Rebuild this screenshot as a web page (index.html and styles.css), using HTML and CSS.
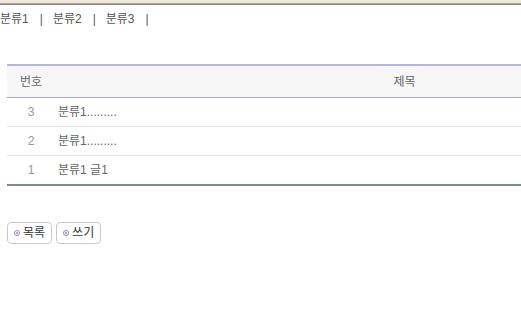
FILE: index.html
```html
<!DOCTYPE html>
<html lang="ko">
<head>
<meta charset="utf-8">
<title>게시판</title>
<link rel="stylesheet" href="styles.css">
</head>
<body>
<div class="page">
  <div class="topbar"></div>
  <div class="nav"><a class="nav-link">분류1</a><span class="sep">|</span><a class="nav-link">분류2</a><span class="sep">|</span><a class="nav-link">분류3</a><span class="sep">|</span></div>
  <table class="board">
    <thead>
      <tr>
        <th class="col-num">번호</th>
        <th class="col-title">제목</th>
      </tr>
    </thead>
    <tbody>
      <tr><td class="num">3</td><td class="title">분류1.........</td></tr>
      <tr><td class="num">2</td><td class="title">분류1.........</td></tr>
      <tr class="last"><td class="num">1</td><td class="title">분류1 글1</td></tr>
    </tbody>
  </table>
  <div class="buttons">
    <span class="btn"><span class="bullet"></span>목록</span>
    <span class="btn"><span class="bullet"></span>쓰기</span>
  </div>
</div>
</body>
</html>
```
FILE: styles.css
```css
html, body {
  margin: 0;
  padding: 0;
  background: #fff;
  overflow: hidden;
}
.page {
  width: 521px;
  height: 314px;
  overflow: hidden;
  font-family: "Liberation Sans", "Noto Sans CJK KR", sans-serif;
  font-size: 12px;
  color: #666;
}
.topbar {
  height: 3px;
  background: #ece9d8;
  border-bottom: 1px solid #aca899;
  box-shadow: 0 1px 0 #8a887e;
}
.nav {
  padding-top: 7px;
  height: 16px;
  line-height: 16px;
  color: #555;
  white-space: nowrap;
}
.nav-link {
  color: #555;
}
.sep {
  margin: 0 10px 0 11px;
  color: #555;
}
.board {
  margin-top: 37px;
  margin-left: 7px;
  width: 747px;
  border-collapse: collapse;
  border-top: 2px solid #b5b5ee;
  border-bottom: 2px solid #7d8996;
  table-layout: fixed;
}
.board th {
  height: 31px;
  padding: 0;
  background: #f7f7f7;
  border-bottom: 1px solid #a8a8c8;
  font-weight: normal;
  color: #666;
  line-height: 14px;
}
.col-num {
  width: 48px;
  text-align: center;
}
.col-title {
  text-align: center;
}
.board td {
  height: 28px;
  padding: 0;
  border-bottom: 1px solid #e3e3e3;
  line-height: 14px;
  color: #666;
}
.board tr.last td {
  border-bottom: none;
}
.board td.num {
  text-align: center;
  color: #999;
}
.board td.title {
  padding-left: 3px;
}
.buttons {
  margin-top: 36px;
  margin-left: 7px;
  display: flex;
  gap: 4px;
}
.btn {
  display: inline-flex;
  align-items: center;
  height: 20px;
  padding: 0 6px 0 6px;
  border: 1px solid #c9c9c9;
  border-radius: 4px;
  background: #fff;
  color: #333;
  font-size: 12px;
  line-height: 14px;
}
.bullet {
  width: 4px;
  height: 4px;
  border: 1px solid #8b8bd0;
  border-radius: 50%;
  margin-right: 3px;
  position: relative;
}
.bullet::after {
  content: "";
  position: absolute;
  left: 1px;
  top: 1px;
  width: 2px;
  height: 2px;
  background: #8b8bd0;
  border-radius: 50%;
}
```
